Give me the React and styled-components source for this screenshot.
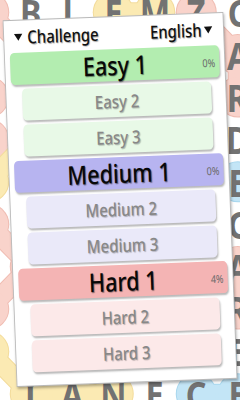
import React from "react";
import styled, { createGlobalStyle } from "styled-components";

const Global = createGlobalStyle`
  html, body { margin: 0; padding: 0; background: #fff; }
  body { font-family: "Noto Sans", "Open Sans", sans-serif; }
`;

const Screen = styled.div`
  position: relative;
  width: 240px;
  height: 400px;
  overflow: hidden;
  background: #ffffff;
`;

const Board = styled.div`
  position: relative;
  z-index: 1;
  display: grid;
  grid-template-columns: repeat(7, 41.5px);
  grid-auto-rows: 42.4px;
  margin-left: -32px;
  margin-top: -9px;
`;

const Cell = styled.div`
  display: flex;
  align-items: center;
  justify-content: center;
`;

const Glyph = styled.span`
  display: inline-block;
  font-family: "Noto Sans", "Open Sans", sans-serif;
  font-weight: 700;
  font-size: 38px;
  line-height: 1;
  color: #727272;
  transform: scaleX(0.85);
`;

const Trails = styled.svg`
  position: absolute;
  left: 0;
  top: 0;
  z-index: 0;
`;

const Panel = styled.div`
  position: absolute;
  z-index: 2;
  left: -13.5px;
  top: 16px;
  width: 266px;
  height: 367px;
  box-sizing: border-box;
  background: #ffffff;
  border: 1px solid rgba(0, 0, 0, 0.28);
  box-shadow: 1px 2px 3px rgba(0, 0, 0, 0.3);
  transform: rotate(-2.2deg) scaleX(0.83);
  display: flex;
  flex-direction: column;
  padding: 0 6px 12px;
`;

const Header = styled.div`
  height: 31px;
  display: flex;
  align-items: center;
  justify-content: space-between;
  padding: 0 7px 0 6px;
`;

const Menu = styled.div`
  display: flex;
  align-items: center;
  gap: ${(p) => p.$gap}px;
  font-size: 18px;
  font-weight: 500;
  color: #111;
  text-shadow: 1px 1px 1px rgba(0, 0, 0, 0.35);
`;

const Caret = styled.span`
  width: 0;
  height: 0;
  border-left: 5px solid transparent;
  border-right: 5px solid transparent;
  border-top: 7px solid #111;
  margin-top: 2px;
`;

const List = styled.div`
  display: flex;
  flex-direction: column;
  gap: 4px;
  margin-top: 1px;
`;

const tones = {
  easy: { main: "#b3edb0", sub: "#e8f9e7" },
  medium: { main: "#b7b4f0", sub: "#eae9f9" },
  hard: { main: "#f4b4b4", sub: "#fce9e9" },
};

const Level = styled.div`
  position: relative;
  height: 32px;
  border-radius: 5px;
  margin: ${(p) => (p.$main ? "0" : "0 11px 0 13px")};
  background: ${(p) => (p.$main ? tones[p.$tone].main : tones[p.$tone].sub)};
  box-shadow: 1px 2px 2px rgba(0, 0, 0, 0.28);
  display: flex;
  align-items: center;
  justify-content: center;
  font-size: ${(p) => (p.$main ? 26 : 18)}px;
  font-weight: 500;
  color: ${(p) => (p.$main ? "#080808" : "#888888")};
  text-shadow: ${(p) =>
    p.$main ? "1px 1px 1px rgba(0,0,0,0.45)" : "1px 1px 1px rgba(0,0,0,0.25)"};
  line-height: 1;
`;

const Percent = styled.span`
  position: absolute;
  right: 5px;
  top: 50%;
  transform: translateY(-40%);
  font-size: 11px;
  font-weight: 400;
  color: #6a6a6a;
  text-shadow: none;
`;

const rows = [
  " BLEMZC",
  "      A",
  "      R",
  "      D",
  "      E",
  "      C",
  "      A",
  "      R",
  "      E",
  " IANECE",
];

const cx = (c) => -11.25 + 41.5 * c;
const cy = (r) => 12.2 + 42.4 * r;

const pink = { color: "#f9d3cb", edge: "#f0bdb3" };
const yellow = { color: "#fbeab3", edge: "#f3dc9c" };
const blue = { color: "#c3e5f6", edge: "#a9d7ee" };

const trails = [
  { ...yellow, pts: [[3, 0], [4, 0]] },
  { ...pink, pts: [[5, 0], [6, 1], [6, 2]] },
  { ...pink, pts: [[0, 0], [1, 1]] },
  { ...pink, pts: [[0, 2], [0, 3], [1, 4]] },
  { ...yellow, pts: [[0, 4], [1, 3]] },
  { ...blue, pts: [[6, 4]] },
  { ...pink, pts: [[0, 5], [1, 6], [0, 7]] },
  { ...pink, pts: [[6, 6], [6, 7]] },
  { ...yellow, pts: [[0, 8], [1, 9], [2, 9], [3, 9]] },
  { ...blue, pts: [[5, 9], [6, 9]] },
];

function TrailLayer() {
  return (
    <Trails width="240" height="400" viewBox="0 0 240 400">
      {trails.map((t, i) => {
        const d = t.pts
          .map(([c, r], j) => `${j ? "L" : "M"}${cx(c)} ${cy(r)}`)
          .join(" ");
        return (
          <g key={i}>
            {t.pts.length > 1 && (
              <path
                d={d}
                fill="none"
                stroke={t.edge}
                strokeWidth="20"
                strokeLinecap="round"
                strokeLinejoin="round"
              />
            )}
            {t.pts.map(([c, r], j) => (
              <circle key={j} cx={cx(c)} cy={cy(r)} r="20.5" fill={t.edge} />
            ))}
            {t.pts.length > 1 && (
              <path
                d={d}
                fill="none"
                stroke={t.color}
                strokeWidth="18"
                strokeLinecap="round"
                strokeLinejoin="round"
              />
            )}
            {t.pts.map(([c, r], j) => (
              <circle key={"i" + j} cx={cx(c)} cy={cy(r)} r="19.5" fill={t.color} />
            ))}
          </g>
        );
      })}
    </Trails>
  );
}

const levels = [
  { tone: "easy", name: "Easy 1", main: true, pct: "0%" },
  { tone: "easy", name: "Easy 2" },
  { tone: "easy", name: "Easy 3" },
  { tone: "medium", name: "Medium 1", main: true, pct: "0%" },
  { tone: "medium", name: "Medium 2" },
  { tone: "medium", name: "Medium 3" },
  { tone: "hard", name: "Hard 1", main: true, pct: "4%" },
  { tone: "hard", name: "Hard 2" },
  { tone: "hard", name: "Hard 3" },
];

export default function App() {
  return (
    <>
      <Global />
      <Screen>
        <TrailLayer />
        <Board>
          {rows.map((row, r) =>
            row.split("").map((ch, c) => (
              <Cell key={`${r}-${c}`}>
                {ch.trim() && <Glyph>{ch}</Glyph>}
              </Cell>
            ))
          )}
        </Board>
        <Panel>
          <Header>
            <Menu $gap={6}>
              <Caret />
              <span>Challenge</span>
            </Menu>
            <Menu $gap={3}>
              <span>English</span>
              <Caret />
            </Menu>
          </Header>
          <List>
            {levels.map((l) => (
              <Level key={l.name} $tone={l.tone} $main={!!l.main}>
                {l.name}
                {l.pct && <Percent>{l.pct}</Percent>}
              </Level>
            ))}
          </List>
        </Panel>
      </Screen>
    </>
  );
}
